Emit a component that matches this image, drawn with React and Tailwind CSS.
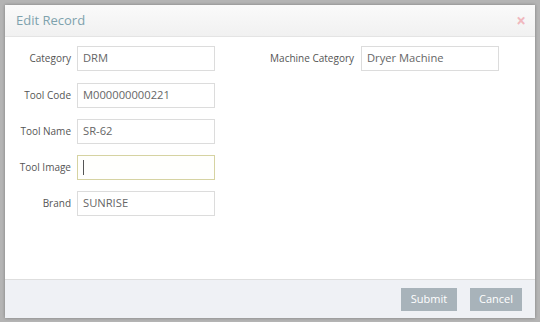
export default function App() {
  const font = { fontFamily: '"Open Sans", "Noto Sans", sans-serif' };
  const Row = ({ label, value, focus, mt }) => (
    <div className={`flex items-center ${mt}`}>
      <div className="w-[66px] text-right text-[10px] text-[#555]">{label}</div>
      <div
        className={`ml-[6px] flex h-[25px] w-[138px] items-center border px-[5px] text-[11.2px] text-[#666] ${
          focus ? "border-[#d6d3a2] bg-[#fffffd]" : "border-[#dcdcdc] bg-white"
        }`}
      >
        {focus ? <span className="h-[15px] w-px bg-[#555]" /> : value}
      </div>
    </div>
  );
  return (
    <div className="h-[322px] w-[540px] bg-[#b4b4b4] p-[5px]" style={font}>
      <div className="flex h-[313px] w-[530px] flex-col bg-white shadow-[0_0_3px_rgba(0,0,0,0.3)]">
        <div className="flex h-[32px] items-center justify-between border-b border-[#e4e4e4] bg-gradient-to-b from-[#fafafa] to-[#f1f1f1] pl-[11px] pr-[9px]">
          <span className="text-[13px] text-[#7ea2ad]">Edit Record</span>
          <span className="text-[17px] font-bold leading-none text-[#f0b8be]">×</span>
        </div>
        <div className="flex flex-1 pt-[9px]">
          <div className="w-[210px]">
            <Row label="Category" value="DRM" mt="" />
            <Row label="Tool Code" value="M000000000221" mt="mt-[12px]" />
            <Row label="Tool Name" value="SR-62" mt="mt-[11px]" />
            <Row label="Tool Image" focus mt="mt-[11px]" />
            <Row label="Brand" value="SUNRISE" mt="mt-[11px]" />
          </div>
          <div className="flex h-[25px] items-center">
            <div className="ml-[45px] w-[94px] text-right text-[10px] text-[#555]">Machine Category</div>
            <div className="ml-[7px] flex h-[25px] w-[138px] items-center border border-[#dcdcdc] px-[5px] text-[11.2px] text-[#666]">
              Dryer Machine
            </div>
          </div>
        </div>
        <div className="flex h-[39px] items-center justify-end gap-[13px] border-t border-[#dedede] bg-[#eff1f5] pr-[13px]">
          <div className="flex h-[23px] w-[56px] items-center justify-center bg-[#a8b3ba] text-[11px] text-white">Submit</div>
          <div className="flex h-[23px] w-[52px] items-center justify-center bg-[#a8b3ba] text-[11px] text-white">Cancel</div>
        </div>
      </div>
    </div>
  );
}
